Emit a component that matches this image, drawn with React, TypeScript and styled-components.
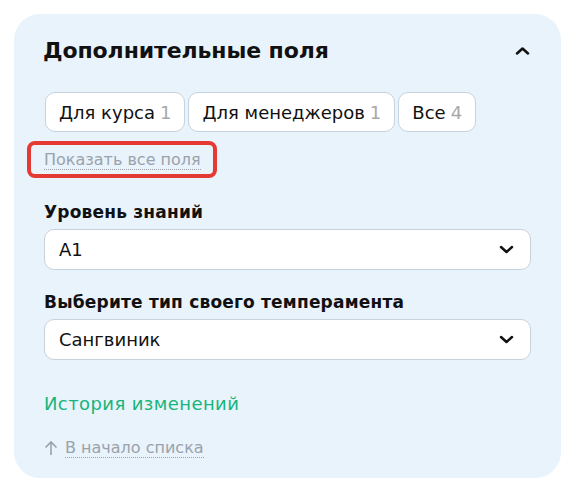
import styled, { createGlobalStyle } from 'styled-components';

const Global = createGlobalStyle`
    * {
        box-sizing: border-box;
    }
    body {
        margin: 0;
        background: #ffffff;
        font-family: "DejaVu Sans", "Noto Sans", sans-serif;
        color: #111111;
    }
`;

const Card = styled.section`
    margin: 14px 0 0 14px;
    width: 547px;
    height: 464px;
    background-color: #e8f3fb;
    border-radius: 26px;
    padding: 14px 30px 0 30px;
    display: flex;
    flex-direction: column;
`;

const Header = styled.div`
    height: 44px;
    display: flex;
    align-items: center;
    justify-content: space-between;
`;

const Title = styled.h2`
    margin: 0 0 0 -1px;
    font-size: 22px;
    font-weight: 700;
    letter-spacing: -0.1px;
`;

const Toggle = styled.button`
    border: none;
    background: none;
    padding: 0;
    width: 20px;
    height: 20px;
    margin-right: -1px;
    display: flex;
    align-items: center;
    justify-content: center;
`;

const Chips = styled.div`
    margin-top: 20px;
    display: flex;
    gap: 3px;
    margin-left: 1px;
`;

const Chip = styled.button`
    height: 40px;
    padding: 0 13px;
    border: 1px solid #c8d2dd;
    border-radius: 10px;
    background-color: #ffffff;
    font-family: inherit;
    font-size: 18px;
    color: #111111;
    display: flex;
    align-items: center;
    gap: 5px;
`;

const Count = styled.span`
    color: #a8a8a8;
`;

const Highlight = styled.div`
    margin: 9px 0 0 -17px;
    width: 190px;
    height: 37px;
    border: 4px solid #e53a33;
    border-radius: 8px;
    padding-left: 13px;
    display: flex;
    align-items: center;
`;

const DottedLink = styled.a`
    font-size: 16px;
    color: #9aa2ac;
    text-decoration: none;
    border-bottom: 1px dotted #9aa2ac;
    line-height: 19px;
    cursor: pointer;
`;

const Field = styled.div<{ $top: number }>`
    margin-top: ${(p) => p.$top}px;
    display: flex;
    flex-direction: column;
    gap: 7px;
`;

const Label = styled.label`
    font-size: 17px;
    font-weight: 600;
    line-height: 20px;
    letter-spacing: 0.2px;
`;

const Select = styled.div`
    height: 41px;
    border: 1px solid #c8d2dd;
    border-radius: 10px;
    background-color: #ffffff;
    padding: 0 16px 0 14px;
    display: flex;
    align-items: center;
    justify-content: space-between;
    font-size: 18px;
`;

const History = styled.a`
    margin-top: 34px;
    font-size: 18px;
    line-height: 20px;
    letter-spacing: 0.4px;
    color: #17b47b;
    cursor: pointer;
`;

const BackRow = styled.div`
    margin-top: 24px;
    display: flex;
    align-items: center;
    gap: 7px;
    color: #9aa2ac;
`;

const Chevron = ({ up }: { up?: boolean }) => (
    <svg width="15" height="9" viewBox="0 0 15 9" fill="none">
        <path
            d={up ? 'M2 7.5L7.5 2.5L13 7.5' : 'M2 2L7.5 7L13 2'}
            stroke="#111111"
            strokeWidth="2.5"
            strokeLinecap="round"
            strokeLinejoin="round"
        />
    </svg>
);

const chips = [
    { title: 'Для курса', count: 1 },
    { title: 'Для менеджеров', count: 1 },
    { title: 'Все', count: 4 },
];

const fields = [
    { label: 'Уровень знаний', value: 'A1', top: 24 },
    { label: 'Выберите тип своего темперамента', value: 'Сангвиник', top: 22 },
];

export default function App() {
    return (
        <>
            <Global />
            <Card>
                <Header>
                    <Title>Дополнительные поля</Title>
                    <Toggle>
                        <Chevron up />
                    </Toggle>
                </Header>
                <Chips>
                    {chips.map((chip) => (
                        <Chip key={chip.title}>
                            {chip.title}
                            <Count>{chip.count}</Count>
                        </Chip>
                    ))}
                </Chips>
                <Highlight>
                    <DottedLink>Показать все поля</DottedLink>
                </Highlight>
                {fields.map((field) => (
                    <Field key={field.label} $top={field.top}>
                        <Label>{field.label}</Label>
                        <Select>
                            {field.value}
                            <Chevron />
                        </Select>
                    </Field>
                ))}
                <History>История изменений</History>
                <BackRow>
                    <svg width="14" height="16" viewBox="0 0 14 16" fill="none">
                        <path d="M7 15V2M1.5 7.5L7 2L12.5 7.5" stroke="#9aa2ac" strokeWidth="1.6" />
                    </svg>
                    <DottedLink>В начало списка</DottedLink>
                </BackRow>
            </Card>
        </>
    );
}
